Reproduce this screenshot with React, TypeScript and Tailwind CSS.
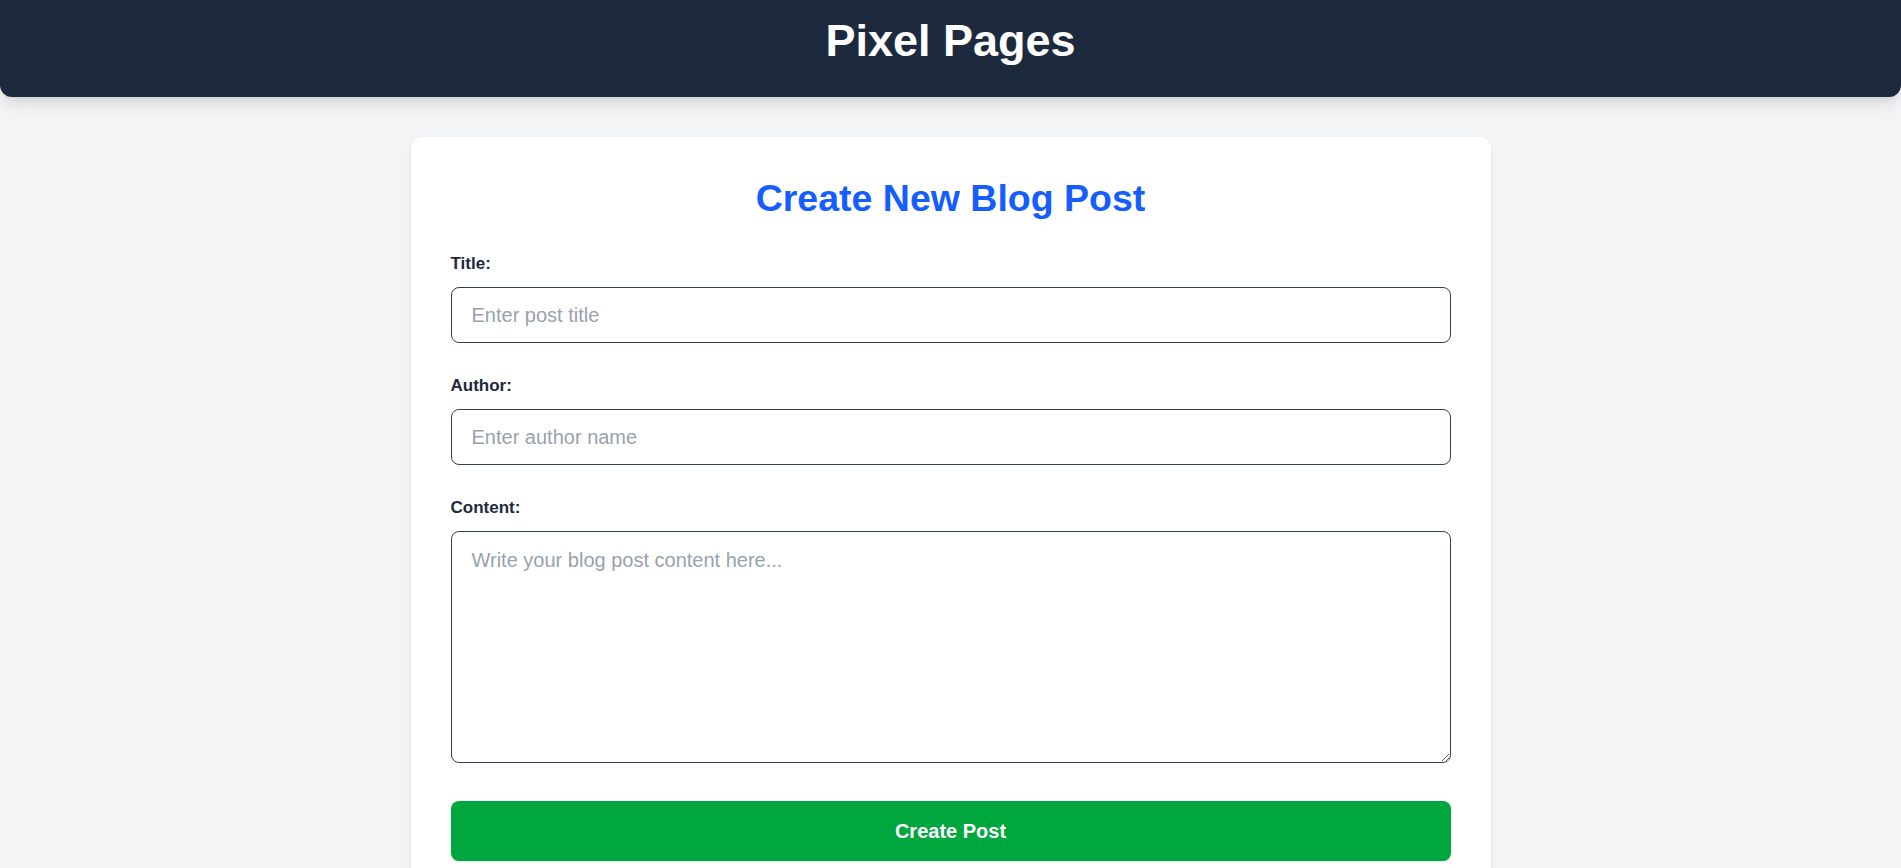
const inputClass =
  "block w-full h-14 px-5 rounded-lg border border-slate-700 bg-white text-xl text-slate-800 placeholder:text-gray-400 outline-none";

const labelClass = "block text-[17px] leading-6 font-bold text-slate-800 mb-[11px]";

const App = () => {
  return (
    <div className="min-h-screen bg-gray-100 font-['Liberation_Sans',Arial,sans-serif]">
      <header className="bg-slate-800 rounded-b-xl shadow-lg pt-4 pb-[31px]">
        <h1 className="text-center text-white font-bold text-[45px] leading-[50px]">
          Pixel Pages
        </h1>
      </header>

      <main className="pt-10 pb-10">
        <div className="max-w-[1080px] mx-auto bg-white rounded-xl shadow-md p-10">
          <h2 className="text-center text-blue-600 font-bold text-[37.5px] leading-[43px] mb-8">
            Create New Blog Post
          </h2>
          <form onSubmit={(e) => e.preventDefault()}>
            <div className="mb-[31px]">
              <label htmlFor="title" className={labelClass}>
                Title:
              </label>
              <input id="title" type="text" placeholder="Enter post title" className={inputClass} />
            </div>
            <div className="mb-[31px]">
              <label htmlFor="author" className={labelClass}>
                Author:
              </label>
              <input id="author" type="text" placeholder="Enter author name" className={inputClass} />
            </div>
            <div className="mb-[38px]">
              <label htmlFor="content" className={labelClass}>
                Content:
              </label>
              <textarea
                id="content"
                placeholder="Write your blog post content here..."
                className="block w-full h-[232px] px-5 py-[15px] rounded-lg border border-slate-700 bg-white text-xl leading-[26px] text-slate-800 placeholder:text-gray-400 outline-none"
              />
            </div>
            <button
              type="submit"
              className="block w-full h-[60px] rounded-lg bg-green-600 text-white font-bold text-xl shadow-sm"
            >
              Create Post
            </button>
          </form>
        </div>
      </main>
    </div>
  );
};

export default App;
